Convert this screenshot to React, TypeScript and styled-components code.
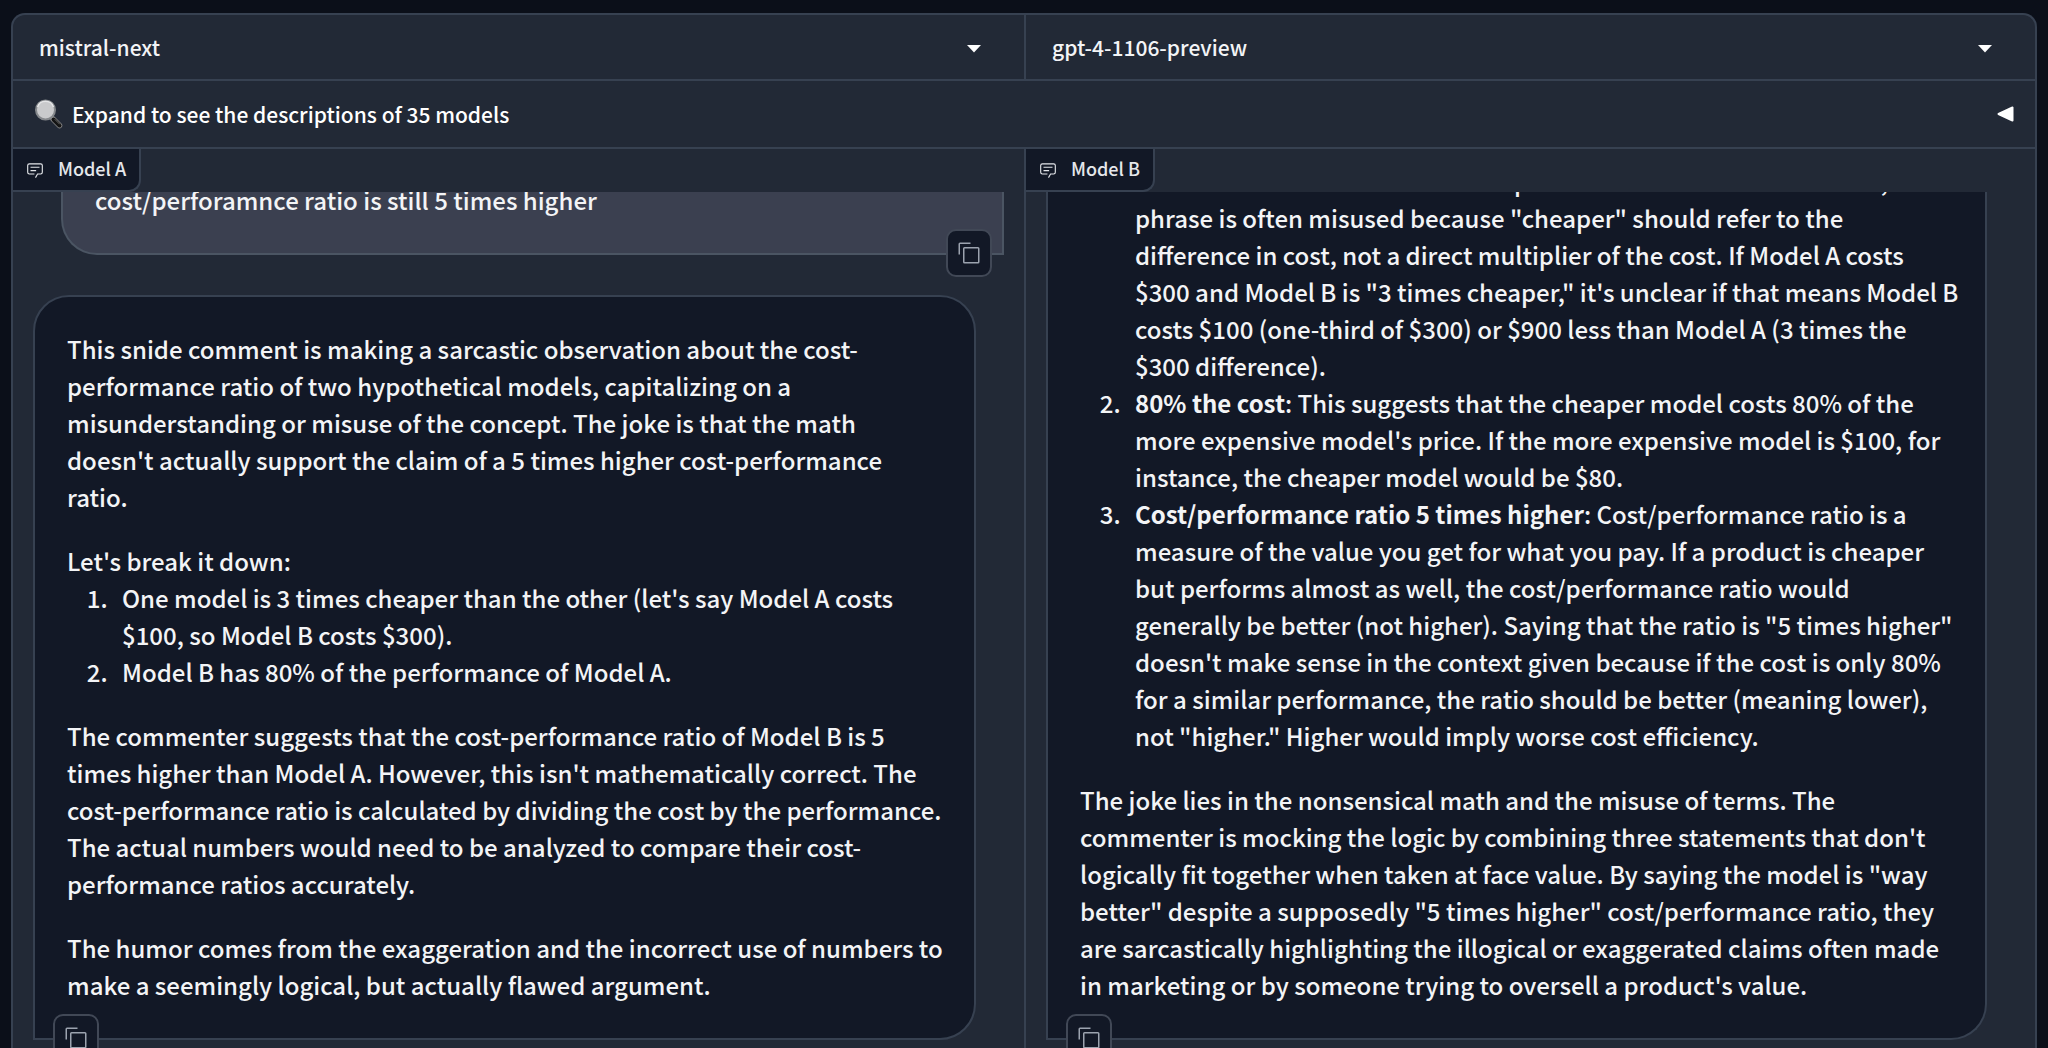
import React from 'react';
import styled, { createGlobalStyle } from 'styled-components';

const line = '#374151';
const panel = '#222936';
const ink = '#121826';

const Global = createGlobalStyle`
  *, *::before, *::after { box-sizing: border-box; }
  body {
    margin: 0;
    background: #0b0f19;
    color: #f3f4f6;
    font-family: "Noto Sans CJK SC", "Source Sans Pro", sans-serif;
    font-size: 21px;
    font-weight: 500;
  }
`;

const Page = styled.main`
  display: flex;
  height: 100vh;
  overflow: hidden;
  padding: 13px 11px 0;
`;

const Board = styled.div`
  flex: 1;
  min-width: 0;
  display: flex;
  flex-direction: column;
  border: 2px solid ${line};
  border-bottom: 0;
  border-radius: 14px 14px 0 0;
  background: ${panel};
  overflow: hidden;
`;

const Columns = styled.div<{ $fill?: boolean }>`
  display: grid;
  grid-template-columns: 1fr 1fr;
  min-height: 0;
  ${(p) => (p.$fill ? 'flex: 1; grid-template-rows: minmax(0, 1fr);' : '')}

  > * + * { border-left: 2px solid ${line}; }
`;

const Picker = styled.div`
  display: flex;
  align-items: center;
  height: 66px;
  padding: 0 43px 0 26px;
  border-bottom: 2px solid ${line};
`;

const PickerSelect = styled.select`
  flex: 1;
  min-width: 0;
  appearance: none;
  border: 0;
  padding: 0 0 1px;
  background: transparent;
  color: inherit;
  font: inherit;
  line-height: 32px;
  outline: none;
`;

const Expander = styled.button`
  display: flex;
  align-items: center;
  gap: 9px;
  height: 68px;
  padding: 0 21px;
  border: 0;
  border-bottom: 2px solid ${line};
  background: transparent;
  color: #fff;
  font: inherit;
  text-align: left;

  span { flex: 1; padding-bottom: 1px; }
`;

const Pane = styled.section`
  display: flex;
  flex-direction: column;
  align-items: flex-start;
  min-width: 0;
  min-height: 0;
`;

const PaneLabel = styled.h2`
  position: relative;
  z-index: 1;
  display: flex;
  align-items: center;
  gap: 14px;
  height: 43px;
  margin: 0;
  padding: 0 13px;
  border: solid ${line};
  border-width: 0 2px 2px 0;
  border-radius: 0 0 12px 0;
  background: ${ink};
  color: #e5e7eb;
  font-size: 18px;
  font-weight: 500;

  span { padding-bottom: 3px; }
`;

const Log = styled.div`
  display: flex;
  flex-direction: column;
  align-self: stretch;
  gap: 40px;
  min-height: 0;
  flex: 1;
  overflow: hidden;
  padding: 0 20px;
`;

const Bubble = styled.article<{ $mine?: boolean; $cut?: number }>`
  position: relative;
  flex: none;
  padding: ${(p) => (p.$cut ? '0' : '33px')} 24px 35px 32px;
  border: 2px solid ${(p) => (p.$mine ? '#4b5563' : line)};
  border-radius: ${(p) => (p.$mine ? '0 0 0 36px' : p.$cut ? '0 0 36px 0' : '36px 36px 36px 0')};
  ${(p) => (p.$cut ? 'border-top: 0;' : '')}
  ${(p) => (p.$mine ? 'margin-left: 28px;' : 'margin-right: 28px;')}
  background: ${(p) => (p.$mine ? '#3b4050' : ink)};
  font-size: 24px;
  line-height: 37px;

  p, ol { margin: 0 0 27px; }
  ol { padding-left: 46px; }
  p + ol { margin-top: -27px; }
  li { padding-left: 9px; }
  > :first-child { margin-top: ${(p) => -(p.$cut ?? 0)}px; }
  > p:last-of-type { margin-bottom: 0; }
`;

const Continued = styled.li`
  list-style: none;
`;

const CopyButton = styled.button<{ $mine?: boolean }>`
  position: absolute;
  bottom: -24px;
  ${(p) => (p.$mine ? 'right: 10px;' : 'left: 18px;')}
  display: grid;
  place-items: center;
  width: 46px;
  height: 48px;
  padding: 0;
  border: 2px solid #414856;
  border-radius: 10px;
  background: ${ink};
  color: #9ca3af;
`;

const DownArrow = () => (
  <svg width="14" height="12" viewBox="0 0 14 12" aria-hidden="true">
    <path d="M0 4h14L7 11.5z" fill="#fff" />
  </svg>
);

const BackArrow = () => (
  <svg width="17" height="16" viewBox="0 0 17 16" aria-hidden="true">
    <path d="M1.5 8 15.500 1.500v13z" fill="#fff" stroke="#fff" strokeWidth="2" strokeLinejoin="round" />
  </svg>
);

const Magnifier = () => (
  <svg width="29" height="32" viewBox="0 0 29 32" aria-hidden="true">
    <path d="M17 19l3 3" stroke="#9a9a9a" strokeWidth="3" />
    <path d="M19 21l6.500 6.500" stroke="#8a8a8a" strokeWidth="5.500" strokeLinecap="round" />
    <path d="M19.500 21.500l6 6" stroke="#141414" strokeWidth="4" strokeLinecap="round" />
    <path d="M21 21.500l4.500 4.500" stroke="#666" strokeWidth="1" strokeLinecap="round" />
    <circle cx="11.500" cy="12" r="9.500" fill="#c9cacc" stroke="#85888c" strokeWidth="2" />
    <path d="M3.500 9a8.500 8.500 0 0 1 16 0" fill="none" stroke="#e4e5e7" strokeWidth="1.500" />
  </svg>
);

const ChatIcon = () => (
  <svg width="18" height="18" viewBox="0 0 32 32" fill="currentColor" aria-hidden="true">
    <path d="M17.740 30 16 29l4-7h6a2 2 0 0 0 2-2V8a2 2 0 0 0-2-2H6a2 2 0 0 0-2 2v12a2 2 0 0 0 2 2h9v2H6a4 4 0 0 1-4-4V8a4 4 0 0 1 4-4h20a4 4 0 0 1 4 4v12a4 4 0 0 1-4 4h-4.840Z" />
    <path d="M8 10h16v2H8zM8 16h10v2H8z" />
  </svg>
);

const CopyIcon = () => (
  <svg width="24" height="24" viewBox="0 0 32 32" fill="currentColor" aria-hidden="true">
    <path d="M28 10v18H10V10h18m0-2H10a2 2 0 0 0-2 2v18a2 2 0 0 0 2 2h18a2 2 0 0 0 2-2V10a2 2 0 0 0-2-2Z" />
    <path d="M4 18H2V4a2 2 0 0 1 2-2h14v2H4Z" />
  </svg>
);

const ModelPicker = ({ label, model }: { label: string; model: string }) => (
  <Picker>
    <PickerSelect aria-label={label} defaultValue={model}>
      <option>{model}</option>
    </PickerSelect>
    <DownArrow />
  </Picker>
);

const Copy = ({ mine }: { mine?: boolean }) => (
  <CopyButton type="button" aria-label="Copy message" $mine={mine}>
    <CopyIcon />
  </CopyButton>
);

export default function App() {
  return (
    <>
      <Global />
      <Page>
        <Board>
          <Columns>
            <ModelPicker label="Model A" model="mistral-next" />
            <ModelPicker label="Model B" model="gpt-4-1106-preview" />
          </Columns>
          <Expander type="button" aria-expanded="false">
            <Magnifier />
            <span>Expand to see the descriptions of 35 models</span>
            <BackArrow />
          </Expander>
          <Columns $fill>
            <Pane>
              <PaneLabel><ChatIcon /><span>Model A</span></PaneLabel>
              <Log>
                <Bubble $mine $cut={11}>
                  <p>cost/perforamnce ratio is still 5 times higher</p>
                  <Copy mine />
                </Bubble>
                <Bubble>
                  <p>
                    This snide comment is making a sarcastic observation about the cost-performance
                    ratio of two hypothetical models, capitalizing on a misunderstanding or misuse of
                    the concept. The joke is that the math<br />
                    doesn't actually support the claim of a 5 times higher cost-performance<br />
                    ratio.
                  </p>
                  <p>Let's break it down:</p>
                  <ol>
                    <li>
                      One model is 3 times cheaper than the other (let's say Model A costs $100, so
                      Model B costs $300).
                    </li>
                    <li>Model B has 80% of the performance of Model A.</li>
                  </ol>
                  <p>
                    The commenter suggests that the cost-performance ratio of Model B is 5<br />
                    times higher than Model A. However, this isn't mathematically correct. The
                    cost-performance ratio is calculated by dividing the cost by the performance. The
                    actual numbers would need to be analyzed to compare their cost-performance ratios
                    accurately.
                  </p>
                  <p>
                    The humor comes from the exaggeration and the incorrect use of numbers to make a
                    seemingly logical, but actually flawed argument.
                  </p>
                  <Copy />
                </Bubble>
              </Log>
            </Pane>
            <Pane>
              <PaneLabel><ChatIcon /><span>Model B</span></PaneLabel>
              <Log>
                <Bubble $cut={30}>
                  <ol>
                    <Continued>
                      that one item costs one-third the price of the other item. However, the
                      phrase is often misused because "cheaper" should refer to the difference in
                      cost, not a direct multiplier of the cost. If Model A costs $300 and Model B is
                      "3 times cheaper," it's unclear if that means Model B costs $100 (one-third of
                      $300) or $900 less than Model A (3 times the $300 difference).
                    </Continued>
                    <li>
                      <strong>80% the cost</strong>: This suggests that the cheaper model costs 80%
                      of the more expensive model's price. If the more expensive model is $100, for
                      instance, the cheaper model would be $80.
                    </li>
                    <li>
                      <strong>Cost/performance ratio 5 times higher</strong>: Cost/performance ratio
                      is a measure of the value you get for what you pay. If a product is cheaper but
                      performs almost as well, the cost/performance ratio would<br />
                      generally be better (not higher). Saying that the ratio is "5 times higher"
                      doesn't make sense in the context given because if the cost is only 80% for a
                      similar performance, the ratio should be better (meaning lower), not "higher."
                      Higher would imply worse cost efficiency.
                    </li>
                  </ol>
                  <p>
                    The joke lies in the nonsensical math and the misuse of terms. The commenter is
                    mocking the logic by combining three statements that don't logically fit together
                    when taken at face value. By saying the model is "way better" despite a
                    supposedly "5 times higher" cost/performance ratio, they are sarcastically
                    highlighting the illogical or exaggerated claims often made in marketing or by
                    someone trying to oversell a product's value.
                  </p>
                  <Copy />
                </Bubble>
              </Log>
            </Pane>
          </Columns>
        </Board>
      </Page>
    </>
  );
}
